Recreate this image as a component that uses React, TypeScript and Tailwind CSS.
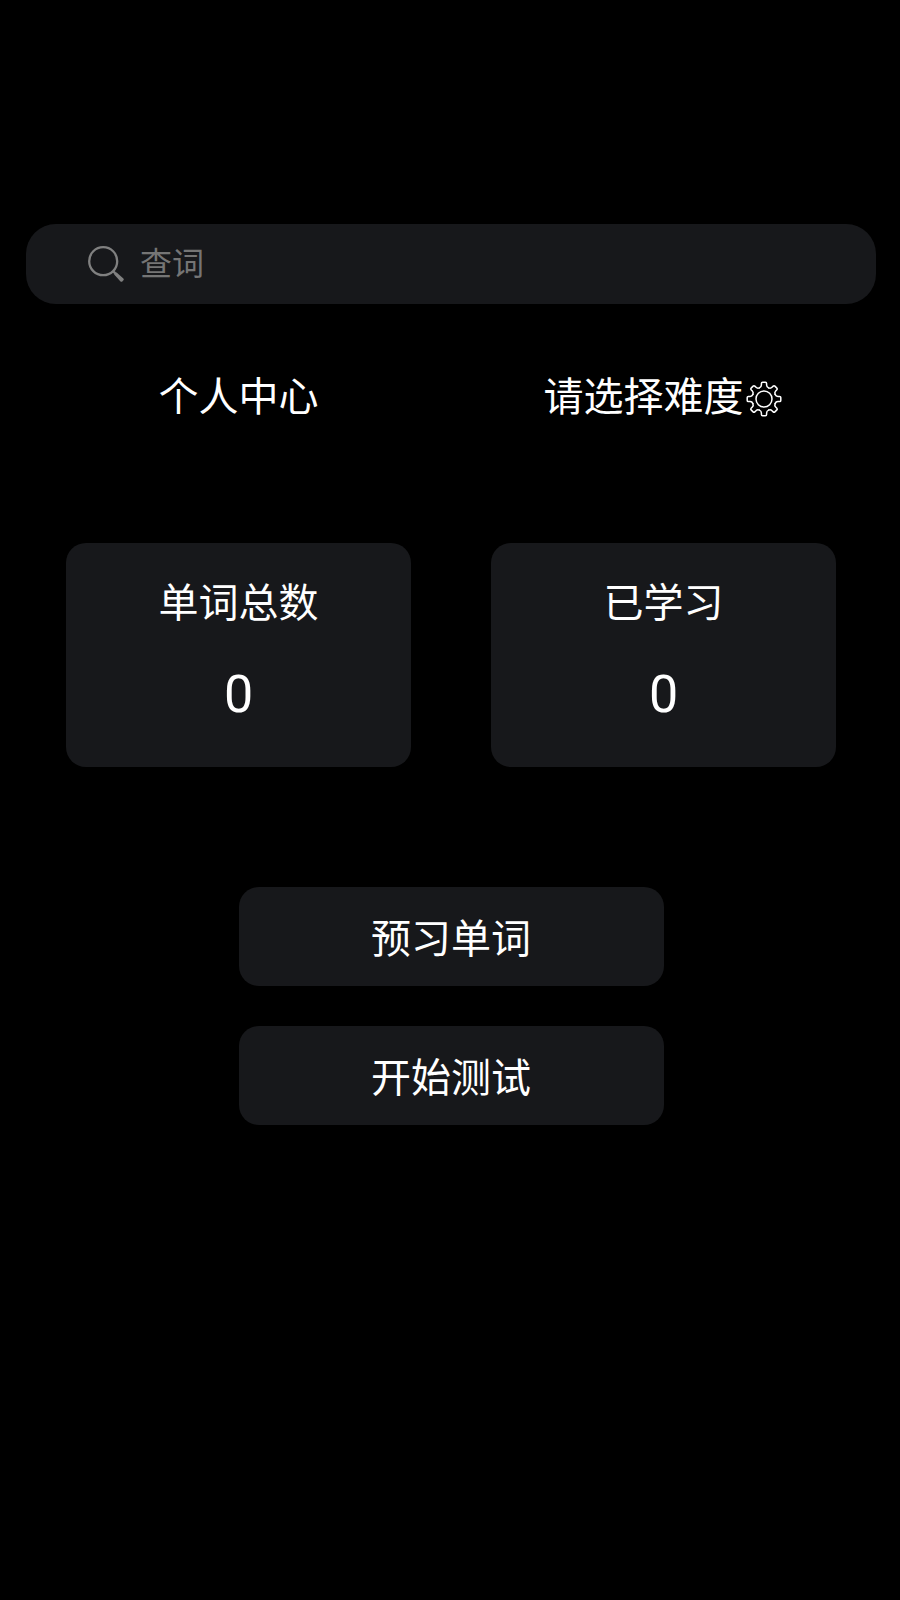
import React from "react";

const TOOTH = "M-4.6 -11.1C-3.3 -11.65 -2.6 -12.6 -2.6 -13.9V-15.6C-2.6 -16.5 -2.2 -16.8 -1.4 -16.8H1.4C2.2 -16.8 2.6 -16.5 2.6 -15.6V-13.9C2.6 -12.6 3.3 -11.65 4.6 -11.1";
const ANGLES = [0, 45, 90, 135, 180, 225, 270, 315];

function GearIcon() {
  return (
    <svg className="h-9 w-9" viewBox="-18 -18 36 36" fill="none" stroke="#fff" strokeWidth="1.5" strokeLinecap="round">
      <circle r="8" />
      {ANGLES.map((a) => (
        <path key={a} d={TOOTH} transform={`rotate(${a})`} />
      ))}
    </svg>
  );
}

function SearchIcon() {
  return (
    <svg className="h-9 w-9 shrink-0" viewBox="0 0 36 36" fill="none" stroke="#808080">
      <circle cx="15.2" cy="15.2" r="14" strokeWidth="2.3" />
      <path d="M24.8 24.8L29 29" strokeWidth="2.4" />
      <path d="M26.2 28.6Q26.6 26.8 28.6 26.4L35.4 32.6Q36.1 33.5 35.4 34.3L34.3 35.4Q33.4 36.1 32.5 35.4Z" fill="#808080" stroke="none" />
    </svg>
  );
}

function StatCard({ label, value }: { label: string; value: number }) {
  return (
    <div className="flex h-56 w-[345px] flex-col items-center rounded-[20px] bg-[#17181b] pt-[27px]">
      <div className="h-[60px] leading-[60px]">{label}</div>
      <div className="mt-[35px] h-[60px] font-[Roboto] text-[52px] leading-[60px]">{value}</div>
    </div>
  );
}

function ActionButton({ label }: { label: string }) {
  return (
    <button className="flex h-[99px] w-[425px] items-center justify-center rounded-[20px] bg-[#17181b] pb-px">
      {label}
    </button>
  );
}

export default function App() {
  return (
    <div className="h-[1600px] w-[900px] overflow-hidden bg-black pl-[26px] pt-56 font-['Noto_Sans_CJK_SC',sans-serif] text-[40px] leading-[60px] text-white">
      <div className="flex h-20 w-[850px] items-center gap-4 rounded-[30px] bg-[#17181b] pl-[62px] text-[32px] text-[#757575]">
        <SearchIcon />
        <span className="pb-1.5 leading-[48px]">查词</span>
      </div>
      <div className="mt-[60px] grid w-[850px] grid-cols-2">
        <div className="text-center">个人中心</div>
        <div className="flex justify-center gap-0.5 pr-0.5">
          <span>请选择难度</span>
          <span className="pt-[17px]">
            <GearIcon />
          </span>
        </div>
      </div>
      <div className="mt-[119px] flex w-[850px] justify-around">
        <StatCard label="单词总数" value={0} />
        <StatCard label="已学习" value={0} />
      </div>
      <div className="mt-[120px] flex w-[850px] flex-col items-center gap-10">
        <ActionButton label="预习单词" />
        <ActionButton label="开始测试" />
      </div>
    </div>
  );
}
